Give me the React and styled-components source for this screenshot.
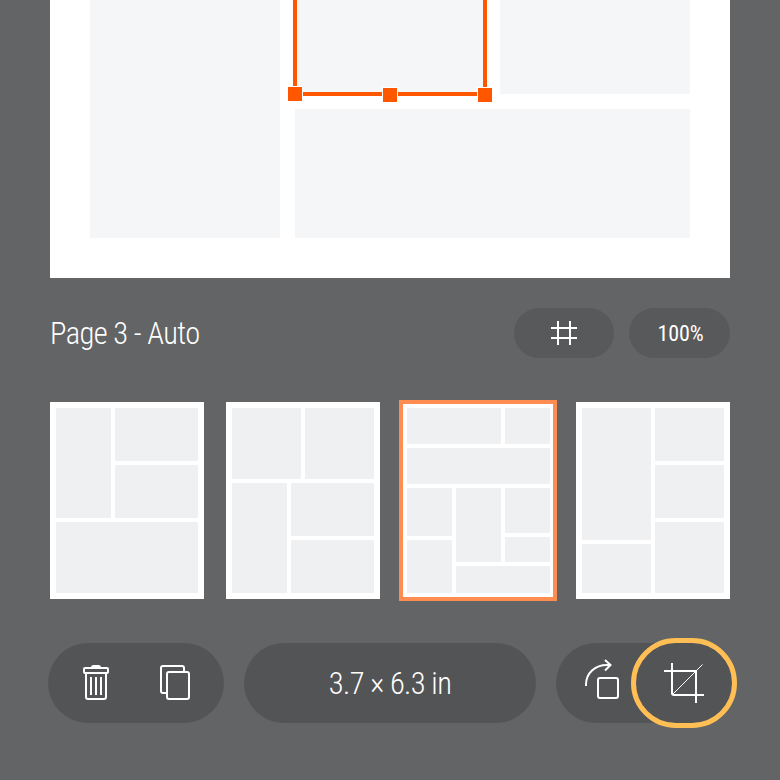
import React from "react";
import styled, { createGlobalStyle, css } from "styled-components";

const GlobalStyle = createGlobalStyle`
  * { box-sizing: border-box; }
  body { margin: 0; background: #636466; }
`;

const Screen = styled.main`
  width: 780px;
  height: 780px;
  overflow: hidden;
  background: #636466;
  color: #fff;
  font-family: "Roboto Condensed", Roboto, sans-serif;
  font-stretch: 75%;
`;

const Page = styled.section`
  display: grid;
  grid-template-columns: 190px 190px 190px;
  grid-template-rows: 94px 129px;
  gap: 15px;
  height: 278px;
  margin: 0 50px;
  padding: 0 40px 40px;
  background: #fff;
`;

const Slot = styled.div`
  position: relative;
  background: #f4f6f8;
  ${(p) => p.$tall && css`grid-row: 1 / 3;`}
  ${(p) => p.$wide && css`grid-column: 2 / 4;`}
`;

const Selection = styled.div`
  position: absolute;
  inset: -20px -2px -2px;
  border: 4px solid #ff5700;
`;

const Handle = styled.span`
  position: absolute;
  left: ${(p) => p.$x}px;
  bottom: ${(p) => p.$bottom}px;
  width: 16px;
  height: 16px;
  border: 1px solid #fff;
  background: #ff5700;
`;

const TitleBar = styled.header`
  display: flex;
  align-items: center;
  height: 50px;
  margin: 30px 50px 0;
  gap: 15px;
`;

const Title = styled.h1`
  flex: 1;
  margin: 0;
  padding-top: 2px;
  font-size: 30.5px;
  font-weight: 300;
  line-height: 50px;
  letter-spacing: -0.62px;
  white-space: nowrap;
`;

const SmallPill = styled.button`
  display: flex;
  align-items: center;
  justify-content: center;
  width: ${(p) => p.$width}px;
  height: 50px;
  padding: 0 0 0 ${(p) => p.$inset || 0}px;
  border: 0;
  border-radius: 25px;
  background: #58595b;
  color: #fff;
  font: inherit;
  font-size: 22px;
  font-weight: 450;
  letter-spacing: -0.1px;
`;

const Layouts = styled.section`
  display: flex;
  align-items: center;
  justify-content: space-between;
  height: 201px;
  margin: 42px 50px 0;
`;

const Thumb = styled.div`
  display: flex;
  width: 154px;
  height: 197px;
  padding: 6px;
  background: #fff;
  ${(p) => p.$selected && css`
    width: 158px;
    height: 201px;
    margin: 0 -3px;
    padding: 4px 3px 4px 4px;
    border: 4px solid #ff8c50;
  `}
`;

const Row = styled.div`
  display: flex;
  gap: 4px;
`;

const Column = styled.div`
  display: flex;
  flex-direction: column;
  gap: 4px;
`;

const Cell = styled.div`
  flex: none;
  width: ${(p) => p.$w}px;
  height: ${(p) => p.$h}px;
  background: #eff0f2;
`;

const Toolbar = styled.footer`
  display: flex;
  gap: 20px;
  margin: 42px 48px 0;
`;

const ToolGroup = styled.div`
  display: flex;
  align-items: center;
  justify-content: center;
  flex: none;
  position: relative;
  width: ${(p) => p.$width}px;
  height: 80px;
  border-radius: 40px;
  background: #535456;
`;

const Dimensions = styled.span`
  padding-top: 2px;
  font-size: 30.5px;
  font-weight: 300;
  line-height: 80px;
  letter-spacing: -0.6px;
  white-space: nowrap;
`;

const ToolButton = styled.button`
  display: flex;
  align-items: center;
  justify-content: center;
  width: 80px;
  height: 80px;
  padding: 0 ${(p) => p.$inset || 0}px 0 0;
  border: 0;
  background: none;
  color: #fff;
`;

const FocusRing = styled.span`
  position: absolute;
  left: 75px;
  top: -5px;
  width: 106px;
  height: 90px;
  border: 5px solid #ffbf55;
  border-radius: 45px;
`;

const Icon = styled.svg`
  display: block;
  flex: none;
  fill: none;
  stroke: currentColor;
  stroke-width: 2;
`;

const GridIcon = () => (
  <Icon width="26" height="24" viewBox="0 0 26 24">
    <path d="M7 0V24M19 0V24M0 7H26M0 17H26" />
  </Icon>
);

const TrashIcon = () => (
  <Icon width="26" height="36" viewBox="0 0 26 36">
    <path d="M9 3V2.5Q9 1 10.500 1H15.500Q17 1 17 2.500V3" />
    <rect x="1" y="3" width="24" height="5" rx="1" />
    <path d="M3 8V32Q3 34 5 34H21Q23 34 23 32V8M8 12V30M13 12V30M18 12V30" />
  </Icon>
);

const CopyIcon = () => (
  <Icon width="30" height="36" viewBox="0 0 30 36">
    <path d="M7 28H3Q1 28 1 26V3Q1 1 3 1H22Q24 1 24 3V7" />
    <rect x="7" y="7" width="22" height="27" rx="2" />
  </Icon>
);

const RotateIcon = () => (
  <Icon width="34" height="48" viewBox="0 0 34 48">
    <path d="M1 27V25.500C1 14 10 6 22 6H26M20 1L25.500 6L20 11.500" />
    <rect x="13" y="19" width="20" height="20" rx="2" />
  </Icon>
);

const CropIcon = () => (
  <Icon width="40" height="40" viewBox="0 0 40 40">
    <path d="M8 0V30Q8 32 10 32H40M0 8H32V40" />
    <path d="M9 31L38.500 1.500" strokeWidth="1" />
  </Icon>
);

export default function App() {
  return (
    <>
      <GlobalStyle />
      <Screen>
        <Page>
          <Slot $tall />
          <Slot>
            <Selection>
              <Handle $x={-10} $bottom={-10} />
              <Handle $x={85} $bottom={-11} />
              <Handle $x={180} $bottom={-11} />
            </Selection>
          </Slot>
          <Slot />
          <Slot $wide />
        </Page>

        <TitleBar>
          <Title>Page 3 - Auto</Title>
          <SmallPill $width={100} aria-label="Grid"><GridIcon /></SmallPill>
          <SmallPill $width={101} $inset={2}>100%</SmallPill>
        </TitleBar>

        <Layouts>
          <Thumb>
            <Column>
              <Row>
                <Cell $w={55} $h={110} />
                <Column>
                  <Cell $w={83} $h={53} />
                  <Cell $w={83} $h={53} />
                </Column>
              </Row>
              <Cell $w={142} $h={71} />
            </Column>
          </Thumb>
          <Thumb>
            <Column>
              <Row>
                <Cell $w={69} $h={71} />
                <Cell $w={69} $h={71} />
              </Row>
              <Row>
                <Cell $w={55} $h={110} />
                <Column>
                  <Cell $w={83} $h={53} />
                  <Cell $w={83} $h={53} />
                </Column>
              </Row>
            </Column>
          </Thumb>
          <Thumb $selected>
            <Column>
              <Row>
                <Cell $w={94} $h={36} />
                <Cell $w={45} $h={36} />
              </Row>
              <Cell $w={143} $h={36} />
              <Row>
                <Column>
                  <Cell $w={45} $h={48} />
                  <Cell $w={45} $h={53} />
                </Column>
                <Column>
                  <Row>
                    <Cell $w={45} $h={74} />
                    <Column>
                      <Cell $w={45} $h={45} />
                      <Cell $w={45} $h={25} />
                    </Column>
                  </Row>
                  <Cell $w={94} $h={27} />
                </Column>
              </Row>
            </Column>
          </Thumb>
          <Thumb>
            <Row>
              <Column>
                <Cell $w={69} $h={132} />
                <Cell $w={69} $h={49} />
              </Column>
              <Column>
                <Cell $w={69} $h={53} />
                <Cell $w={69} $h={53} />
                <Cell $w={69} $h={71} />
              </Column>
            </Row>
          </Thumb>
        </Layouts>

        <Toolbar>
          <ToolGroup $width={176}>
            <ToolButton aria-label="Delete"><TrashIcon /></ToolButton>
            <ToolButton aria-label="Duplicate" $inset={2}><CopyIcon /></ToolButton>
          </ToolGroup>
          <ToolGroup $width={292}>
            <Dimensions>3.7 × 6.3 in</Dimensions>
          </ToolGroup>
          <ToolGroup $width={176}>
            <ToolButton aria-label="Rotate" $inset={4}><RotateIcon /></ToolButton>
            <ToolButton aria-label="Crop"><CropIcon /></ToolButton>
            <FocusRing />
          </ToolGroup>
        </Toolbar>
      </Screen>
    </>
  );
}
